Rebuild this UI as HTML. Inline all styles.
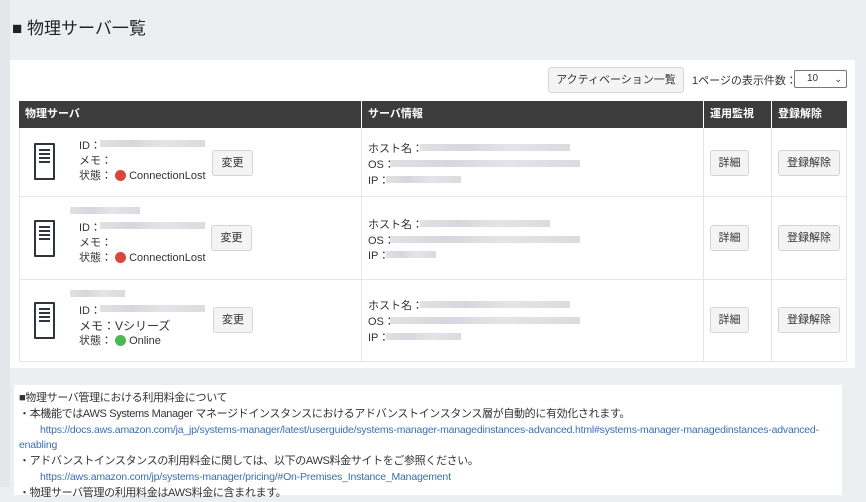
<!DOCTYPE html>
<html><head><meta charset="utf-8"><style>
*{margin:0;padding:0;box-sizing:border-box}
body{width:866px;height:487px;background:#eceef2;font-family:"Liberation Sans","Noto Sans CJK JP",sans-serif;font-size:11px;color:#333;position:relative;overflow:hidden}
.a{position:absolute;white-space:nowrap}
.bl{position:absolute;height:7px;background:linear-gradient(90deg,#dcdce0,#cfcfd6 30%,#e0e0e4 60%,#d4d4da);opacity:.85}
.btn{position:absolute;background:#f4f4f4;border:1px solid #d4d4d4;border-radius:3px;text-align:center;font-size:11px;color:#333}
.dot{display:inline-block;width:11px;height:11px;border-radius:50%;vertical-align:-2px;margin-right:3px}
.icon{position:absolute;width:21px;height:37px;border:2px solid #2f3440;border-radius:1px}
.icon i{position:absolute;left:3px;width:11px;height:2px;background:#2f3440}
.vl{position:absolute;width:1px;background:#e6e6e6}
.hl{position:absolute;height:1px;background:#e6e6e6;left:19px;width:828px}
.th{position:absolute;top:101px;height:27px;line-height:27px;color:#fff;font-weight:bold;font-size:11px;padding-left:6px;background:#3c3c3c}
a{color:#3a6fb0;text-decoration:none;font-size:10.5px;letter-spacing:-0.2px}
</style></head><body>
<div class="a" style="left:0;top:0;width:10px;height:487px;background:#e4e6ea"></div>
<div class="a" style="left:12px;top:14px;font-size:17px;color:#222">■ 物理サーバ一覧</div>
<div class="a" style="left:10px;top:60px;width:845px;height:308px;background:#fff;border-radius:2px"></div>
<div class="btn" style="left:548px;top:67px;width:136px;height:26px;line-height:24px">アクティベーション一覧</div>
<div class="a" style="left:692px;top:72px">1ページの表示件数：</div>
<div class="a" style="left:794px;top:70px;width:53px;height:18px;border:1px solid #777;border-radius:2px;padding-left:12px;line-height:16px;font-size:10px">10<span style="position:absolute;right:4px;font-size:9px">⌄</span></div>
<div class="th" style="left:19px;width:342px">物理サーバ</div>
<div class="th" style="left:362px;width:341px">サーバ情報</div>
<div class="th" style="left:704px;width:67px">運用監視</div>
<div class="th" style="left:772px;width:75px">登録解除</div>
<div class="vl" style="left:361px;top:128px;height:233px"></div>
<div class="vl" style="left:703px;top:128px;height:233px"></div>
<div class="vl" style="left:771px;top:128px;height:233px"></div>
<div class="vl" style="left:19px;top:128px;height:233px"></div>
<div class="vl" style="left:846px;top:128px;height:233px"></div>
<div class="hl" style="top:196px"></div><div class="hl" style="top:279px"></div><div class="hl" style="top:361px"></div>

<!-- row1 -->
<div class="icon" style="left:34px;top:143px"><i style="top:4px"></i><i style="top:8px"></i><i style="top:12px"></i><i style="top:16px"></i></div>
<div class="a" style="left:79px;top:137px">ID：</div><div class="bl" style="left:100px;top:140px;width:105px"></div>
<div class="a" style="left:79px;top:152px">メモ：</div>
<div class="a" style="left:79px;top:167px">状態： <span class="dot" style="background:#d9463e"></span>ConnectionLost</div>
<div class="btn" style="left:212px;top:150px;width:41px;height:26px;line-height:24px">変更</div>
<div class="a" style="left:368px;top:140px">ホスト名：</div><div class="bl" style="left:420px;top:144px;width:150px"></div>
<div class="a" style="left:368px;top:156px">OS：</div><div class="bl" style="left:390px;top:160px;width:190px"></div>
<div class="a" style="left:368px;top:172px">IP：</div><div class="bl" style="left:386px;top:176px;width:75px"></div>
<div class="btn" style="left:710px;top:150px;width:39px;height:26px;line-height:24px">詳細</div>
<div class="btn" style="left:778px;top:150px;width:62px;height:26px;line-height:24px">登録解除</div>

<!-- row2 -->
<div class="bl" style="left:70px;top:207px;width:70px"></div>
<div class="icon" style="left:34px;top:220px"><i style="top:4px"></i><i style="top:8px"></i><i style="top:12px"></i><i style="top:16px"></i></div>
<div class="a" style="left:79px;top:219px">ID：</div><div class="bl" style="left:100px;top:222px;width:105px"></div>
<div class="a" style="left:79px;top:234px">メモ：</div>
<div class="a" style="left:79px;top:249px">状態： <span class="dot" style="background:#d9463e"></span>ConnectionLost</div>
<div class="btn" style="left:211px;top:225px;width:41px;height:26px;line-height:24px">変更</div>
<div class="a" style="left:368px;top:216px">ホスト名：</div><div class="bl" style="left:420px;top:220px;width:130px"></div>
<div class="a" style="left:368px;top:232px">OS：</div><div class="bl" style="left:390px;top:236px;width:190px"></div>
<div class="a" style="left:368px;top:247px">IP：</div><div class="bl" style="left:386px;top:251px;width:50px"></div>
<div class="btn" style="left:710px;top:225px;width:39px;height:26px;line-height:24px">詳細</div>
<div class="btn" style="left:778px;top:225px;width:62px;height:26px;line-height:24px">登録解除</div>

<!-- row3 -->
<div class="bl" style="left:70px;top:290px;width:55px"></div>
<div class="icon" style="left:34px;top:302px"><i style="top:4px"></i><i style="top:8px"></i><i style="top:12px"></i><i style="top:16px"></i></div>
<div class="a" style="left:79px;top:302px">ID：</div><div class="bl" style="left:100px;top:305px;width:105px"></div>
<div class="a" style="left:79px;top:317px;font-size:12px">メモ：Vシリーズ</div>
<div class="a" style="left:79px;top:332px">状態： <span class="dot" style="background:#4cb84f"></span>Online</div>
<div class="btn" style="left:213px;top:307px;width:40px;height:26px;line-height:24px">変更</div>
<div class="a" style="left:368px;top:297px">ホスト名：</div><div class="bl" style="left:420px;top:301px;width:150px"></div>
<div class="a" style="left:368px;top:313px">OS：</div><div class="bl" style="left:390px;top:317px;width:190px"></div>
<div class="a" style="left:368px;top:329px">IP：</div><div class="bl" style="left:386px;top:333px;width:75px"></div>
<div class="btn" style="left:710px;top:307px;width:39px;height:26px;line-height:24px">詳細</div>
<div class="btn" style="left:778px;top:307px;width:62px;height:26px;line-height:24px">登録解除</div>

<!-- bottom -->
<div class="a" style="left:14px;top:385px;width:828px;height:110px;background:#fff"></div>
<div class="a" style="left:19px;top:391px;font-size:11px;line-height:15.8px;color:#333;letter-spacing:-0.35px">■物理サーバ管理における利用料金について<br>
・本機能ではAWS Systems Manager マネージドインスタンスにおけるアドバンストインスタンス層が自動的に有効化されます。<br>
<span style="display:inline-block;width:21px"></span><a>https://docs.aws.amazon.com/ja_jp/systems-manager/latest/userguide/systems-manager-managedinstances-advanced.html#systems-manager-managedinstances-advanced-</a><br>
<a>enabling</a><br>
・アドバンストインスタンスの利用料金に関しては、以下のAWS料金サイトをご参照ください。<br>
<span style="display:inline-block;width:21px"></span><a>https://aws.amazon.com/jp/systems-manager/pricing/#On-Premises_Instance_Management</a><br>
・物理サーバ管理の利用料金はAWS料金に含まれます。</div>
</body></html>
